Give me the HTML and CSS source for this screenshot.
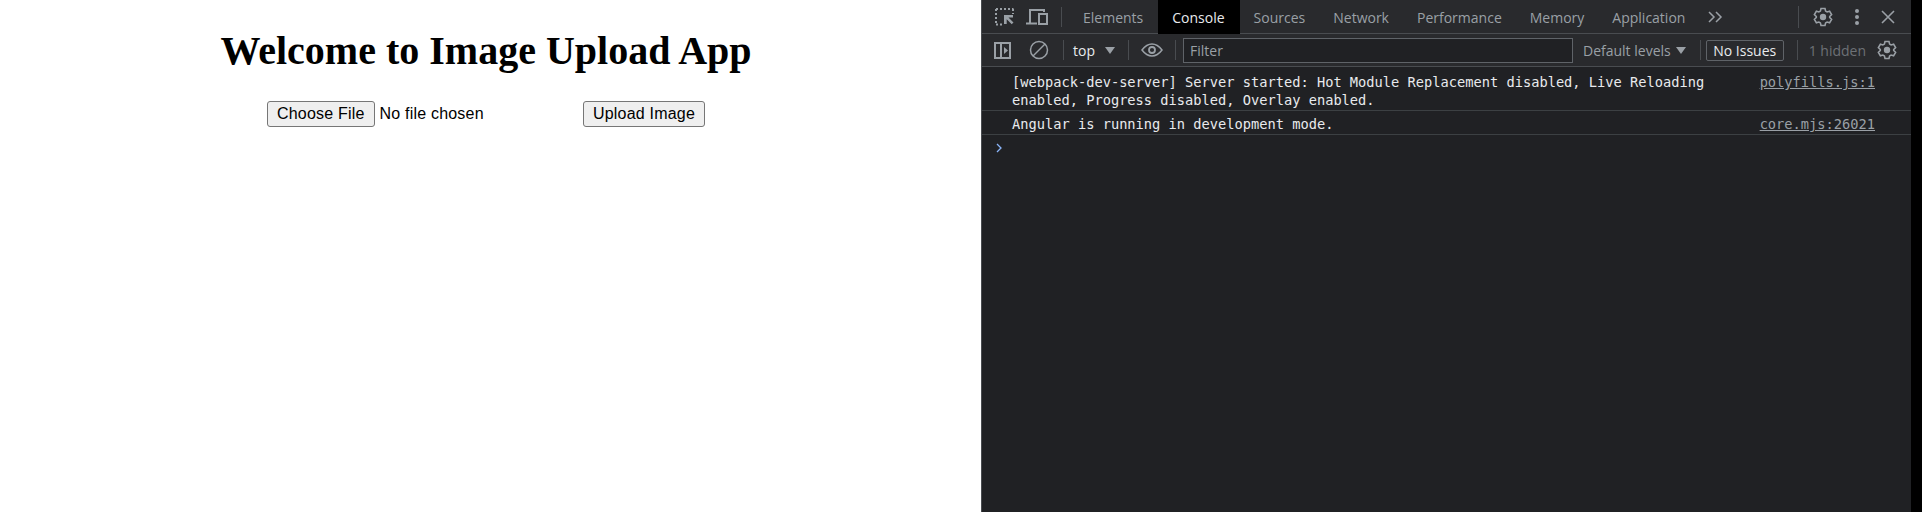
FILE: index.html
```html
<!DOCTYPE html>
<html lang="en">
<head>
<meta charset="utf-8">
<title>Image Upload App</title>
<link rel="stylesheet" href="styles.css">
</head>
<body>
<main class="app">
  <h1 class="title">Welcome to Image Upload App</h1>
  <form class="upload">
    <input class="file" type="file">
    <button class="btn" type="button">Upload Image</button>
  </form>
</main>
<section class="devtools">
  <div class="bar tabs">
    <svg class="ico ico-inspect" width="20" height="20" viewBox="0 0 20 20"><path d="M1 2h2M5 2h2M9 2h2M13 2h2M17 2h1.500M1 2v2M1 6v2M1 10v2M1 14v2M1 17.500h2M5 17.500h2M18 2v2M18 6v1" fill="none" stroke="#9aa0a6" stroke-width="2"/><path d="M9 8h9v2.500h-4.500l5 5-1.800 1.800-5-5V17H9z" fill="#9aa0a6"/></svg>
    <svg class="ico ico-device" width="22" height="18" viewBox="0 0 22 18"><path d="M4 15V2h14v2M0 15.500h11" fill="none" stroke="#9aa0a6" stroke-width="2"/><path d="M13 6h8v10h-8z" fill="none" stroke="#9aa0a6" stroke-width="2"/></svg>
    <span class="sep sep-tabs"></span>
    <nav class="tablist">
      <span class="tab tab-first">Elements</span>
      <span class="tab tab-active">Console</span>
      <span class="tab">Sources</span>
      <span class="tab">Network</span>
      <span class="tab">Performance</span>
      <span class="tab">Memory</span>
      <span class="tab">Application</span>
    </nav>
    <svg class="ico ico-more" width="15" height="12" viewBox="0 0 15 12"><path d="M1 1l5 5-5 5M8 1l5 5-5 5" fill="none" stroke="#9aa0a6" stroke-width="1.500"/></svg>
    <span class="sep sep-end"></span>
    <svg class="ico ico-gear" width="20" height="20" viewBox="0 0 20 20"><path d="M8 1.500h4l.6 2.600 1.500.9 2.500-.8 2 3.500-1.900 1.800v1l1.900 1.800-2 3.500-2.500-.8-1.500.9-.6 2.600H8l-.6-2.600-1.500-.9-2.500.8-2-3.500L3.300 10.500v-1L1.400 7.700l2-3.500 2.500.8 1.500-.9z" fill="none" stroke="#9aa0a6" stroke-width="1.600"/><circle cx="10" cy="10" r="3.200" fill="#9aa0a6"/></svg>
    <svg class="ico ico-dots" width="6" height="16" viewBox="0 0 6 16"><circle cx="3" cy="2" r="2" fill="#9aa0a6"/><circle cx="3" cy="8" r="2" fill="#9aa0a6"/><circle cx="3" cy="14" r="2" fill="#9aa0a6"/></svg>
    <svg class="ico ico-close" width="14" height="14" viewBox="0 0 14 14"><path d="M1 1l12 12M13 1L1 13" fill="none" stroke="#9aa0a6" stroke-width="1.600"/></svg>
  </div>
  <div class="bar filters">
    <svg class="ico ico-side" width="17" height="17" viewBox="0 0 17 17"><path d="M1 1h15v15H1zM7 1v15" fill="none" stroke="#9aa0a6" stroke-width="2"/><path d="M10 5l4 3.500-4 3.500z" fill="#9aa0a6"/></svg>
    <svg class="ico ico-ban" width="20" height="20" viewBox="0 0 20 20"><circle cx="10" cy="10" r="8.500" fill="none" stroke="#9aa0a6" stroke-width="1.500"/><path d="M4 16L16 4" stroke="#9aa0a6" stroke-width="1.500"/></svg>
    <span class="sep sep-ban"></span>
    <span class="ctx">top</span>
    <span class="caret caret-top"></span>
    <span class="sep sep-ctx"></span>
    <svg class="ico ico-eye" width="22" height="14" viewBox="0 0 22 14"><path d="M1 7c3-4 6.500-6 10-6s7 2 10 6c-3 4-6.500 6-10 6S4 11 1 7z" fill="none" stroke="#9aa0a6" stroke-width="1.500"/><circle cx="11" cy="7" r="3" fill="none" stroke="#9aa0a6" stroke-width="1.800"/></svg>
    <span class="sep sep-eye"></span>
    <div class="filter">Filter</div>
    <span class="levels">Default levels</span>
    <span class="caret caret-levels"></span>
    <span class="sep sep-levels"></span>
    <span class="issues">No Issues</span>
    <span class="sep sep-issues"></span>
    <span class="hidden-count">1 hidden</span>
    <svg class="ico ico-gear2" width="20" height="20" viewBox="0 0 20 20"><path d="M8 1.500h4l.6 2.600 1.500.9 2.500-.8 2 3.500-1.900 1.800v1l1.900 1.800-2 3.500-2.500-.8-1.500.9-.6 2.600H8l-.6-2.600-1.500-.9-2.500.8-2-3.500L3.300 10.500v-1L1.400 7.700l2-3.500 2.500.8 1.500-.9z" fill="none" stroke="#9aa0a6" stroke-width="1.600"/><circle cx="10" cy="10" r="3.200" fill="#9aa0a6"/></svg>
  </div>
  <div class="log">
    <div class="msg msg-wrap">
      <span class="msg-text">[webpack-dev-server] Server started: Hot Module Replacement disabled, Live Reloading enabled, Progress disabled, Overlay enabled.</span>
      <a class="src">polyfills.js:1</a>
    </div>
    <div class="msg">
      <span class="msg-text">Angular is running in development mode.</span>
      <a class="src">core.mjs:26021</a>
    </div>
    <div class="prompt">
      <svg width="7" height="10" viewBox="0 0 7 10"><path d="M1 1l4 4-4 4" fill="none" stroke="#8ab4f8" stroke-width="1.300"/></svg>
    </div>
  </div>
</section>
<div class="edge"></div>
</body>
</html>
```

FILE: styles.css
```css
* { box-sizing: border-box; }
html, body { margin: 0; height: 100%; }
body { display: flex; height: 512px; overflow: hidden; background: #fff; }

.app { flex: 0 0 981px; padding: 28px 0 0 8px; font-family: "Liberation Serif", serif; color: #000; }
.title { margin: 0 17px 0 0; text-align: center; font-size: 40px; line-height: 46px; font-weight: 700; }
.upload { display: flex; margin: 27px 0 0 259px; align-items: center; letter-spacing: .2px; }
.file { width: 316px; font: 16px "Liberation Sans", sans-serif; letter-spacing: .2px; color: #000; }
.btn { font: 16px "Liberation Sans", sans-serif; letter-spacing: .2px; color: #000; height: 26px; padding: 1px 9px; border: 1px solid #767676; border-radius: 3px; background: #efefef; }
.file::file-selector-button { font: 16px "Liberation Sans", sans-serif; letter-spacing: .2px; height: 26px; padding: 1px 9px; border: 1px solid #767676; border-radius: 3px; background: #efefef; color: #000; margin-right: 5px; }

.devtools { flex: 0 0 930px; display: flex; flex-direction: column; background: #202124; border-left: 1px solid #494c50; font-family: "Open Sans", sans-serif; color: #9aa0a6; }
.edge { flex: 1; background: #000; }

.bar { display: flex; align-items: center; background: #292a2d; border-bottom: 1px solid #494c50; flex: none; }
.tabs { height: 34px; padding-left: 13px; }
.filters { height: 33px; padding-left: 12px; }
.ico { flex: none; display: block; }
.sep { flex: none; width: 1px; height: 20px; background: #494c50; }

.ico-device { margin-left: 11px; }
.sep-tabs { margin-left: 13px; }
.tablist { display: flex; align-self: stretch; margin-left: 7px; }
.tab { display: flex; align-items: center; padding: 0 14px; font-size: 14px; white-space: nowrap; margin-bottom: -1px; }
.tab-first { padding-right: 15px; }
.tab-active { background: #000; color: #e8eaed; padding-right: 15px; }
.ico-more { margin-left: 9px; }
.sep-end { margin-left: 75px; height: 22px; }
.ico-gear { margin-left: 14px; }
.ico-dots { margin-left: 21px; }
.ico-close { margin-left: 21px; }

.ico-ban { margin-left: 18px; }
.sep-ban { margin-left: 14px; }
.ctx { margin-left: 9px; font-size: 14px; color: #e8eaed; }
.caret { width: 0; height: 0; border-left: 5px solid transparent; border-right: 5px solid transparent; border-top: 7px solid #9aa0a6; flex: none; }
.caret-top { margin-left: 10px; }
.sep-ctx { margin-left: 13px; }
.ico-eye { margin-left: 12px; }
.sep-eye { margin-left: 12px; }
.filter { flex: none; width: 390px; height: 25px; margin-left: 7px; padding-left: 6px; border: 1px solid #5f6368; background: #202124; font-size: 14px; line-height: 23px; color: #9aa0a6; }
.levels { margin-left: 10px; font-size: 14px; white-space: nowrap; }
.caret-levels { margin-left: 5px; }
.sep-levels { margin-left: 14px; }
.issues { margin-left: 5px; width: 78px; height: 21px; flex: none; border: 1px solid #5f6368; border-radius: 2px; font-size: 14px; line-height: 19px; text-align: center; color: #e8eaed; }
.sep-issues { margin-left: 13px; }
.hidden-count { margin-left: 11px; font-size: 14px; color: #6d7176; white-space: nowrap; }
.ico-gear2 { margin-left: 11px; }

.log { flex: 1; font: 13.700px/18px "DejaVu Sans Mono", monospace; color: #e8eaed; }
.msg { display: flex; justify-content: space-between; padding: 4px 36px 1px 30px; border-bottom: 1px solid #3c4043; }
.msg-wrap { padding-top: 6px; }
.msg-text { width: 700px; }
.src { color: #9aa0a6; text-decoration: underline; white-space: nowrap; }
.prompt { padding: 8px 0 0 14px; }
.prompt svg { display: block; }
```
